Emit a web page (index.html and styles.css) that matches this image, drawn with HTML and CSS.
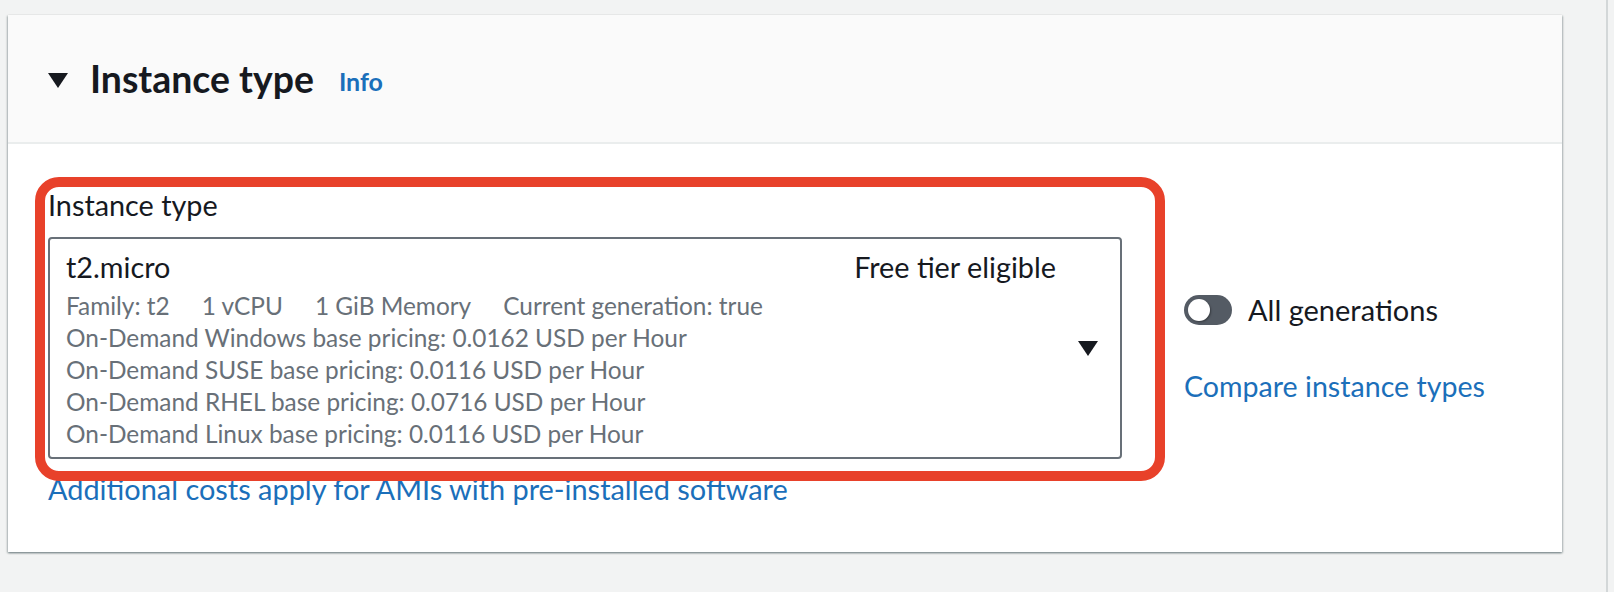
FILE: index.html
```html
<!DOCTYPE html>
<html lang="en">
<head>
<meta charset="utf-8">
<title>Instance type</title>
<link rel="stylesheet" href="styles.css">
</head>
<body>
<div class="page">
  <section class="card">
    <header class="card-header">
      <svg class="caret caret-header" width="20" height="15" viewBox="0 0 20 15" aria-hidden="true"><polygon points="0,0 20,0 10,15"/></svg>
      <h2 class="title">Instance type</h2>
      <a class="info" href="#">Info</a>
    </header>
    <div class="card-body">
      <div class="form-row">
        <div class="field">
          <div class="field-label">Instance type</div>
          <div class="select">
            <div class="select-content">
              <div class="option-head">
                <span class="option-name">t2.micro</span>
                <span class="option-tag">Free tier eligible</span>
              </div>
              <div class="option-desc">
                <div class="tags">
                  <span>Family: t2</span>
                  <span>1 vCPU</span>
                  <span>1 GiB Memory</span>
                  <span>Current generation: true</span>
                </div>
                <div>On-Demand Windows base pricing: 0.0162 USD per Hour</div>
                <div>On-Demand SUSE base pricing: 0.0116 USD per Hour</div>
                <div>On-Demand RHEL base pricing: 0.0716 USD per Hour</div>
                <div>On-Demand Linux base pricing: 0.0116 USD per Hour</div>
              </div>
            </div>
            <div class="select-caret">
              <svg class="caret" width="20" height="15" viewBox="0 0 20 15" aria-hidden="true"><polygon points="0,0 20,0 10,15"/></svg>
            </div>
          </div>
          <a class="link cost-link" href="#">Additional costs apply for AMIs with pre-installed software</a>
        </div>
        <div class="side">
          <div class="toggle-row">
            <span class="toggle"><span class="knob"></span></span>
            <span class="toggle-label">All generations</span>
          </div>
          <a class="link compare-link" href="#">Compare instance types</a>
        </div>
      </div>
      <div class="highlight" aria-hidden="true"></div>
    </div>
  </section>
</div>
</body>
</html>
```
FILE: styles.css
```css
html, body {
  margin: 0;
  padding: 0;
}

body {
  background: #f2f3f3;
  font-family: "Lato", "Open Sans", sans-serif;
  color: #16191f;
  width: 1614px;
  height: 592px;
  overflow: hidden;
}

.page {
  width: 1608px;
  height: 592px;
  border-right: 2px solid #d3d7d8;
  padding-top: 15px;
  padding-left: 8px;
  box-sizing: border-box;
}

.card {
  width: 1554px;
  background: #ffffff;
  box-shadow: 0 1px 2px rgba(0, 28, 36, 0.35), 1px 1px 2px rgba(0, 28, 36, 0.18), -1px 1px 2px rgba(0, 28, 36, 0.18);
}

.card-header {
  display: flex;
  align-items: center;
  height: 127px;
  padding-left: 40px;
  background: #fafafa;
  border-bottom: 2px solid #eaeded;
}

.caret {
  display: block;
  fill: #16191f;
}

.caret-header {
  margin-right: 22px;
  margin-top: 4px;
}

.title {
  margin: 0;
  font-size: 37.4px;
  line-height: 44px;
  font-weight: 700;
  color: #16191f;
}

.info {
  margin-left: 25px;
  margin-top: 4px;
  font-size: 25px;
  font-weight: 700;
  color: #1b6fba;
  text-decoration: none;
}

.card-body {
  position: relative;
  padding: 43px 0 45px 40px;
}

.form-row {
  display: flex;
  align-items: flex-start;
}

.field {
  width: 1074px;
  display: flex;
  flex-direction: column;
}

.field-label {
  font-size: 28.8px;
  line-height: 36px;
  color: #16191f;
}

.select {
  margin-top: 14px;
  display: flex;
  border: 2px solid #687078;
  border-radius: 4px;
  height: 222px;
  box-sizing: border-box;
}

.select-content {
  flex: 1;
  padding: 10px 0 7px 16px;
}

.option-head {
  display: flex;
  justify-content: space-between;
  font-size: 28.8px;
  line-height: 36px;
  color: #16191f;
}

.option-desc {
  margin-top: 5px;
  font-size: 24.4px;
  line-height: 32px;
  color: #687078;
}

.tags {
  display: flex;
  gap: 32px;
}

.select-caret {
  width: 64px;
  display: flex;
  align-items: center;
  justify-content: center;
}

.link {
  color: #1b6fba;
  text-decoration: none;
  font-size: 28.9px;
  line-height: 36px;
}

.cost-link {
  margin-top: 12px;
  align-self: flex-start;
}

.side {
  margin-left: 62px;
  padding-top: 105px;
  display: flex;
  flex-direction: column;
  align-items: flex-start;
}

.toggle-row {
  display: flex;
  align-items: center;
  height: 36px;
  gap: 16px;
}

.toggle {
  position: relative;
  width: 48px;
  height: 30px;
  border-radius: 15px;
  background: #545b64;
}

.knob {
  position: absolute;
  left: 4px;
  top: 4px;
  width: 22px;
  height: 22px;
  border-radius: 50%;
  background: #ffffff;
  box-shadow: 1px 1px 2px rgba(0, 0, 0, 0.35);
}

.toggle-label {
  font-size: 29px;
  line-height: 36px;
  color: #16191f;
}

.compare-link {
  margin-top: 40px;
  font-size: 28.6px;
}

.highlight {
  position: absolute;
  left: 27px;
  top: 33px;
  width: 1130px;
  height: 304px;
  box-sizing: border-box;
  border: 10px solid #e8412a;
  border-radius: 24px;
  pointer-events: none;
}
```
